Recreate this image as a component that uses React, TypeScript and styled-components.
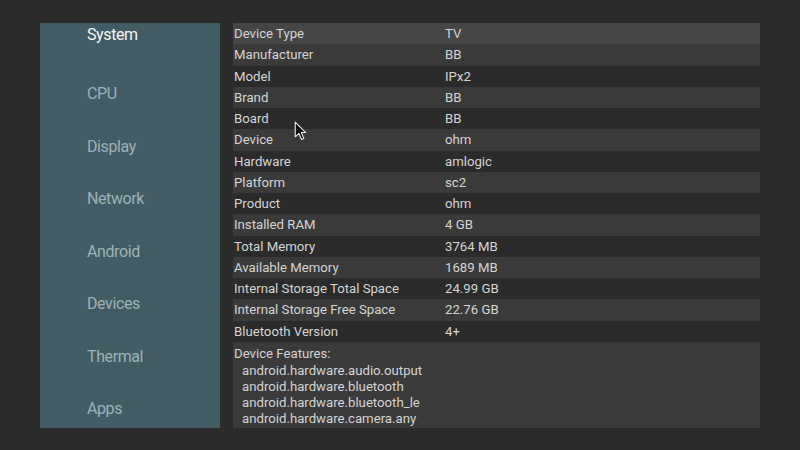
import React from 'react'
import styled, { createGlobalStyle } from 'styled-components'

const GlobalStyle = createGlobalStyle`
  html, body {
    margin: 0;
    padding: 0;
    background: #2b2b2b;
  }
  body {
    font-family: Roboto, "Liberation Sans", sans-serif;
  }
`

const menu = ['System', 'CPU', 'Display', 'Network', 'Android', 'Devices', 'Thermal', 'Apps']

const rows: [string, string][] = [
    ['Device Type', 'TV'],
    ['Manufacturer', 'BB'],
    ['Model', 'IPx2'],
    ['Brand', 'BB'],
    ['Board', 'BB'],
    ['Device', 'ohm'],
    ['Hardware', 'amlogic'],
    ['Platform', 'sc2'],
    ['Product', 'ohm'],
    ['Installed RAM', '4 GB'],
    ['Total Memory', '3764 MB'],
    ['Available Memory', '1689 MB'],
    ['Internal Storage Total Space', '24.99 GB'],
    ['Internal Storage Free Space', '22.76 GB'],
    ['Bluetooth Version', '4+'],
]

const features = [
    'android.hardware.audio.output',
    'android.hardware.bluetooth',
    'android.hardware.bluetooth_le',
    'android.hardware.camera.any',
]

const App = () => {
    return (
        <Screen>
            <GlobalStyle/>
            <Sidebar>
                {menu.map((item, i) => (
                    <MenuItem key={item} active={i === 0}>{item}</MenuItem>
                ))}
            </Sidebar>
            <InfoTable>
                {rows.map(([label, value], i) => (
                    <Row key={label} shade={i === 0 ? 'focus' : i % 2 === 1 ? 'alt' : 'plain'}>
                        <Label>{label}</Label>
                        <Value>{value}</Value>
                    </Row>
                ))}
                <Features>
                    <Label>Device Features:</Label>
                    {features.map(f => (
                        <Feature key={f}>{f}</Feature>
                    ))}
                </Features>
            </InfoTable>
            <Cursor viewBox="0 0 12 19" width="13" height="20">
                <path d="M1 1 L1 15 L4.5 11.8 L7 17.5 L9.2 16.5 L6.8 11 L11 11 Z"
                      fill="#111" stroke="#eee" strokeWidth="1" strokeLinejoin="round"/>
            </Cursor>
        </Screen>
    )
}
export default App

const Screen = styled.div`
  position: relative;
  width: 800px;
  height: 450px;
  box-sizing: border-box;
  padding: 23px 40px 22px 40px;
  display: flex;
  gap: 13px;
  background: #2b2b2b;
  overflow: hidden;
`

const Sidebar = styled.nav`
  width: 180px;
  height: 405px;
  background: #435c63;
  display: flex;
  flex-direction: column;
  gap: 30.5px;
  padding: 1px 0 0 47px;
  box-sizing: border-box;
`

const MenuItem = styled.div<{ active: boolean }>`
  flex-shrink: 0;
  height: 22px;
  line-height: 22px;
  margin-bottom: ${p => (p.active ? '6.5px' : '0')};
  font-size: 16px;
  letter-spacing: -0.4px;
  color: ${p => (p.active ? '#f4f6f6' : '#9db2b7')};
`

const InfoTable = styled.section`
  width: 527px;
  display: flex;
  flex-direction: column;
`

const shades = {
    focus: '#464646',
    alt: '#3a3a3a',
    plain: 'transparent',
}

const Row = styled.div<{ shade: keyof typeof shades }>`
  height: 21.25px;
  display: flex;
  align-items: center;
  background: ${p => shades[p.shade]};
  font-size: 13.2px;
  color: #d4d4d4;
`

const Label = styled.span`
  width: 211px;
  padding-left: 1px;
  font-size: 13.2px;
  color: #d4d4d4;
`

const Value = styled.span`
  flex: 1;
`

const Features = styled.div`
  height: 86px;
  background: #3a3a3a;
  display: flex;
  flex-direction: column;
  padding-top: 4px;
  box-sizing: border-box;
  line-height: 16px;
`

const Feature = styled.div`
  padding-left: 9px;
  font-size: 13.2px;
  color: #d4d4d4;
  &:first-of-type {
    margin-top: 1px;
  }
`

const Cursor = styled.svg`
  position: absolute;
  left: 294px;
  top: 121px;
`
